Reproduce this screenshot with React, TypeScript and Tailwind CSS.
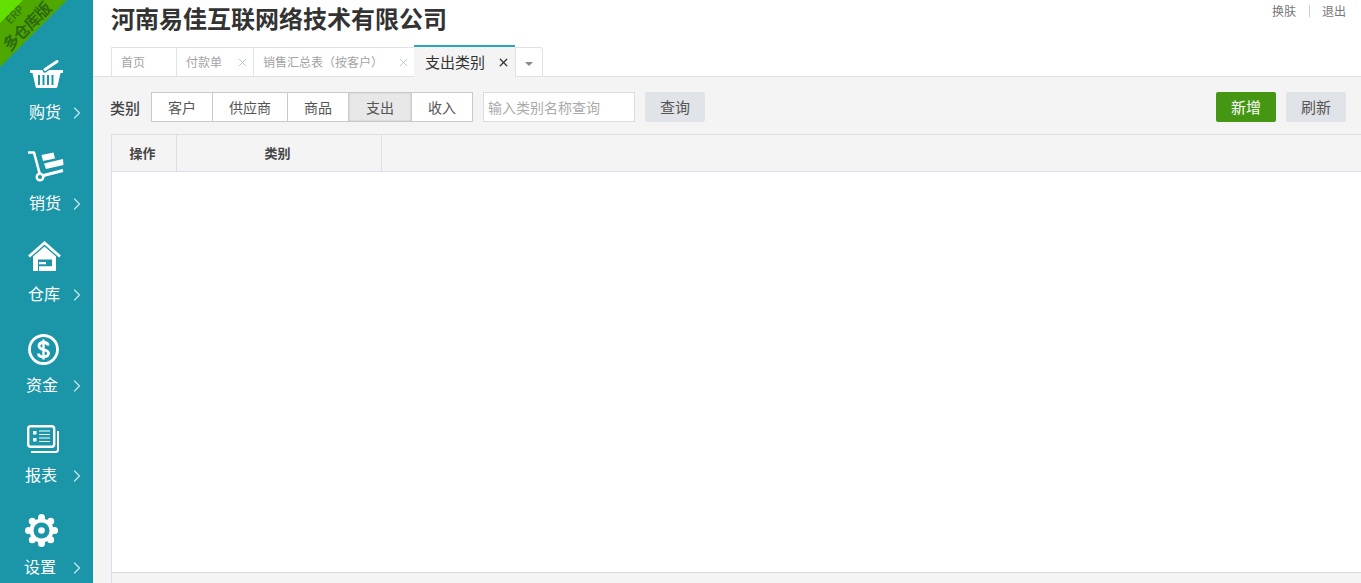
import { ChevronRight, X } from "lucide-react";
import type { ReactNode } from "react";

const FONT = "font-['Noto_Sans_CJK_SC','Liberation_Sans',sans-serif]";
const TEAL = "#1b96a9";
const GEAR_TEETH = [0, 45, 90, 135, 180, 225, 270, 315];

const NAV: { label: string; icon: ReactNode; h: string; iconPos: string; labelPl: string }[] = [
  {
    label: "购货",
    h: "h-[91px]",
    iconPos: "pl-[30px] pt-[2px]",
    labelPl: "pl-[29px]",
    icon: (
      <svg viewBox="0 0 33 28" className="w-[33px] h-[28px]" fill="white">
        <path d="M0 10h33v3h-2.500l-3 13.500q-.3 1.500-2 1.500H7.500q-1.700 0-2-1.500L2.500 13H0z" />
        <path d="M15 10 L27 1.500" stroke={TEAL} strokeWidth="5" strokeLinecap="round" />
        <path d="M15 9.500 L27 1.500" stroke="white" strokeWidth="3" strokeLinecap="round" />
        <path d="M8 15h2v10H8zM12.500 15h2v10h-2zM17 15h2v10h-2zM21.500 15h2v10h-2z" fill={TEAL} />
      </svg>
    ),
  },
  {
    label: "销货",
    h: "h-[91px]",
    iconPos: "pl-[28px] pt-[2px]",
    labelPl: "pl-[29px]",
    icon: (
      <svg viewBox="0 0 36 31" className="w-[36px] h-[31px]" fill="none">
        <path d="M1 1.500h5l5.500 20.500" stroke="white" strokeWidth="2.600" strokeLinecap="round" strokeLinejoin="round" />
        <circle cx="12" cy="26" r="3.300" stroke="white" strokeWidth="2.400" />
        <path d="M15.500 24.500 L35 19.500" stroke="white" strokeWidth="3" />
        <path d="M13.500 4l12-2.500 1.500 6-12 2.500zM16 12.500L35 8l.5 6L18 18z" fill="white" />
      </svg>
    ),
  },
  {
    label: "仓库",
    h: "h-[91px]",
    iconPos: "pl-[28px] pt-[1px]",
    labelPl: "pl-[28px]",
    icon: (
      <svg viewBox="0 0 33 31" className="w-[33px] h-[31px]" fill="white">
        <path d="M1 15.500 L16.500 1.800 L32 15.500" fill="none" stroke="white" strokeWidth="2.800" />
        <path d="M5 15.500 L16.500 5.500 L28 15.500V30H5z" />
        <path d="M10 18.500h14V30H10z" fill={TEAL} />
        <path d="M11 21h7v2.200h-7zM11 25.200h13V30H11z" fill="white" />
      </svg>
    ),
  },
  {
    label: "资金",
    h: "h-[90px]",
    iconPos: "pl-[28px] pt-[3px]",
    labelPl: "pl-[26px]",
    icon: (
      <svg viewBox="0 0 31 31" className="w-[31px] h-[31px]" fill="none">
        <circle cx="15.500" cy="15.500" r="14" stroke="white" strokeWidth="2.800" />
        <path d="M20 11.500C20 9.500 18 8.500 15.500 8.500s-4.500 1.300-4.500 3.500c0 5 9.500 2.500 9.500 7.300 0 2.300-2.200 3.500-5 3.500s-5-1.200-5-3.300" stroke="white" strokeWidth="2.800" />
        <path d="M15.500 5.500v20" stroke="white" strokeWidth="2.400" />
      </svg>
    ),
  },
  {
    label: "报表",
    h: "h-[92px]",
    iconPos: "pl-[27px] pt-[4px]",
    labelPl: "pl-[25px]",
    icon: (
      <svg viewBox="0 0 32 28" className="w-[32px] h-[28px]" fill="none">
        <rect x="1.200" y="1.200" width="26" height="20.500" rx="2.500" stroke="white" strokeWidth="2.400" />
        <path d="M31 6v18.500q0 2.500-2.500 2.500H4" stroke="white" strokeWidth="2" />
        <path d="M6 6h3.500v3.500H6zM6 13h3.500v3.500H6z" fill="white" />
        <path d="M12 6h11M12 9.500h11M12 13h11M12 16.500h11" stroke="white" strokeWidth="1.200" />
      </svg>
    ),
  },
  {
    label: "设置",
    h: "h-[91px]",
    iconPos: "pl-[25px] pt-[1px]",
    labelPl: "pl-[24px]",
    icon: (
      <svg viewBox="0 0 33 33" className="w-[33px] h-[33px]" fill="white">
        <circle cx="16.500" cy="16.500" r="12" />
        {GEAR_TEETH.map((deg) => (
          <circle
            key={deg}
            cx={16.5 + 13 * Math.cos((deg * Math.PI) / 180)}
            cy={16.5 + 13 * Math.sin((deg * Math.PI) / 180)}
            r="3.500"
          />
        ))}
        <circle cx="16.500" cy="16.500" r="8" fill={TEAL} />
        <circle cx="16.500" cy="16.500" r="3.300" />
      </svg>
    ),
  },
];

const SEGMENTS = ["客户", "供应商", "商品", "支出", "收入"];
const SEGMENT_W = ["w-[60px]", "w-[75px]", "w-[61px]", "w-[63px]", "w-[61px]"];

function Sidebar() {
  return (
    <aside className="relative w-[93px] shrink-0 h-[583px] overflow-hidden bg-[#1b96a9] pt-[58px]">
      <div className="absolute left-0 top-0 w-[67px] h-[67px] bg-[#4fa800] [clip-path:polygon(0_0,100%_0,0_100%)]" />
      <div className="absolute left-0 top-0 w-[23px] h-[23px] bg-[#63e000] [clip-path:polygon(0_0,100%_0,0_100%)]" />
      <div className="absolute left-[-14px] top-[4px] w-[70px] -rotate-45 text-center text-[#2c6b12]">
        <div className="text-[11px] leading-[14px]">ERP</div>
        <div className="text-[16px] leading-[20px] font-bold tracking-[-1px]">多仓库版</div>
      </div>
      {NAV.map((item) => (
        <div key={item.label} className={item.h}>
          <div className={`h-[43px] ${item.iconPos}`}>{item.icon}</div>
          <div className={`${item.labelPl} pr-[6px] h-[20px] flex items-center text-white text-[16px] leading-[20px]`}>
            <span>{item.label}</span>
            <ChevronRight className="ml-auto mt-[4px] w-[20px] h-[20px] text-[#c4e3e8]" strokeWidth={1.500} />
          </div>
        </div>
      ))}
    </aside>
  );
}

function Tab({ label, w, closable }: { label: string; w: string; closable?: boolean }) {
  return (
    <div className={`${w} h-[29px] flex items-center justify-between pl-[9px] pr-[4px] border-l border-t border-[#e0e3e6] bg-white text-[12px] text-[#a3a3a3]`}>
      <span>{label}</span>
      {closable && <X className="w-[13px] h-[13px] text-[#b5cbe3]" strokeWidth={1.800} />}
    </div>
  );
}

function Header() {
  return (
    <header className="relative h-[77px] shrink-0 bg-white border-b border-[#e0e2e4]">
      <h1 className="pl-[18px] pt-[2px] text-[24px] leading-[32px] font-bold text-[#333]">河南易佳互联网络技术有限公司</h1>
      <div className="absolute right-[15px] top-[3px] flex items-center text-[12px] leading-[16px] text-[#777]">
        <span>换肤</span>
        <span className="ml-[13px] mr-[12px] w-px h-[12px] bg-[#ccc]" />
        <span>退出</span>
      </div>
      <div className="absolute left-[18px] top-[47px] flex items-start">
        <Tab label="首页" w="w-[65px]" />
        <Tab label="付款单" w="w-[77px]" closable />
        <Tab label="销售汇总表（按客户）" w="w-[161px]" closable />
        <div className="relative -mt-[2px] h-[32px] w-[101px] flex items-center justify-between pl-[11px] pr-[5px] border-t-2 border-[#2fa5b8] bg-[#f4f4f4] text-[15px] text-[#333]">
          <span>支出类别</span>
          <X className="w-[13px] h-[13px] text-[#333]" strokeWidth={2.400} />
        </div>
        <div className="h-[29px] w-[28px] flex items-center justify-center rounded-tr-[3px] border-x border-t border-[#e0e3e6] bg-white">
          <span className="mt-[3px] border-x-[4px] border-t-[4px] border-x-transparent border-t-[#888]" />
        </div>
      </div>
    </header>
  );
}

function Toolbar() {
  return (
    <div className="h-[57px] shrink-0 flex items-center pl-[17px] pr-[15px] pt-[3px] text-[14px]">
      <span className="w-[41px] pt-[2px] text-[15px] font-medium text-[#444]">类别</span>
      <div className="flex h-[30px] border border-[#c9c9c9] bg-white text-[#555]">
        {SEGMENTS.map((s, i) => (
          <div
            key={s}
            className={`${SEGMENT_W[i]} flex items-center justify-center ${i > 0 ? "border-l border-[#c9c9c9]" : ""} ${
              s === "支出" ? "bg-[#e8e8e8] shadow-[inset_0_0_2px_#bbb]" : ""
            }`}
          >
            {s}
          </div>
        ))}
      </div>
      <div className="ml-[10px] w-[152px] h-[30px] pl-[4px] flex items-center border border-[#d6dde6] bg-white text-[#aaa]">输入类别名称查询</div>
      <button className="ml-[10px] w-[60px] h-[30px] rounded-[2px] bg-[#e0e3e7] text-[15px] text-[#555]">查询</button>
      <button className="ml-auto w-[60px] h-[30px] rounded-[2px] bg-[#459713] text-[15px] text-white">新增</button>
      <button className="ml-[10px] w-[60px] h-[30px] rounded-[2px] bg-[#e0e3e7] text-[15px] text-[#555]">刷新</button>
    </div>
  );
}

function Grid() {
  return (
    <div className="ml-[18px] flex-1 flex flex-col border-l border-t border-[#d8dfe6] bg-white">
      <div className="h-[37px] shrink-0 flex border-b border-[#d8dfe6] bg-[#f4f4f4] text-[13px] font-bold text-[#444]">
        <div className="w-[65px] pr-[3px] flex items-center justify-center border-r border-[#d8dfe6]">操作</div>
        <div className="w-[205px] pr-[3px] flex items-center justify-center border-r border-[#d8dfe6]">类别</div>
      </div>
      <div className="flex-1" />
      <div className="h-[11px] shrink-0 border-t border-[#dcdcdc] bg-[#f4f4f4]" />
    </div>
  );
}

export default function App() {
  return (
    <div className={`${FONT} flex w-[1361px] h-[583px] overflow-hidden bg-[#f4f4f4]`}>
      <Sidebar />
      <main className="flex-1 min-w-0 flex flex-col">
        <Header />
        <Toolbar />
        <Grid />
      </main>
    </div>
  );
}
